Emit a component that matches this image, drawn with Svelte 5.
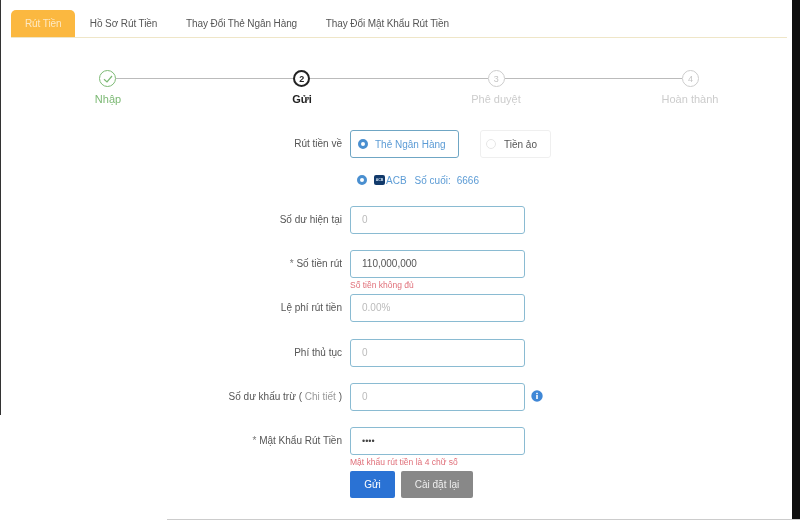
<script>
  const tabs = ['Rút Tiền', 'Hồ Sơ Rút Tiền', 'Thay Đổi Thẻ Ngân Hàng', 'Thay Đổi Mật Khẩu Rút Tiền'];
  const steps = [
    { label: 'Nhập', state: 'done' },
    { label: 'Gửi', state: 'current', n: 2 },
    { label: 'Phê duyệt', state: 'todo', n: 3 },
    { label: 'Hoàn thành', state: 'todo', n: 4 }
  ];
</script>

<div class="shot">
  <div class="page">
    <nav class="tabs">
      {#each tabs as tab, i}
        <div class="tab" class:active={i === 0}>{tab}</div>
      {/each}
    </nav>

    <div class="track">
      {#each steps as step, i}
        {#if i > 0}<span class="line"></span>{/if}
        <span class="dot {step.state}">
          {#if step.state === 'done'}
            <svg width="12" height="12" viewBox="0 0 12 12" fill="none" stroke="#7cb974" stroke-width="1.2"><path d="M2 6.2 5 9l5-6" /></svg>
          {:else}
            {step.n}
          {/if}
        </span>
      {/each}
    </div>
    <div class="labels">
      {#each steps as step}
        <div class="step-label {step.state}">{step.label}</div>
      {/each}
    </div>

    <form class="form">
      <div class="row choice">
        <div class="label">Rút tiền về</div>
        <div class="option on"><span class="radio on"></span>Thẻ Ngân Hàng</div>
        <div class="option off"><span class="radio"></span>Tiền ảo</div>
      </div>

      <div class="bank">
        <span class="radio on"></span>
        <span class="acb">ACB</span>
        <span class="bank-name">ACB</span>
        <span>Số cuối:</span>
        <span>6666</span>
      </div>

      <div class="row">
        <div class="label">Số dư hiện tại</div>
        <div class="control"><div class="input muted">0</div></div>
      </div>
      <div class="row">
        <div class="label"><i>*</i> Số tiền rút</div>
        <div class="control">
          <div class="input">110,000,000</div>
          <div class="error">Số tiền không đủ</div>
        </div>
      </div>
      <div class="row">
        <div class="label">Lệ phí rút tiền</div>
        <div class="control"><div class="input muted">0.00%</div></div>
      </div>
      <div class="row">
        <div class="label">Phí thủ tục</div>
        <div class="control"><div class="input muted">0</div></div>
      </div>
      <div class="row">
        <div class="label">Số dư khấu trừ ( <span class="link">Chi tiết</span> )</div>
        <div class="control"><div class="input muted">0</div></div>
        <svg class="info" width="12" height="12" viewBox="0 0 12 12">
          <circle cx="6" cy="6" r="5.7" fill="#3f87d6" />
          <rect x="5.2" y="5" width="1.6" height="4" fill="#fff" />
          <rect x="5.2" y="2.8" width="1.6" height="1.4" fill="#fff" />
        </svg>
      </div>
      <div class="row">
        <div class="label"><i>*</i> Mật Khẩu Rút Tiền</div>
        <div class="control">
          <div class="input dots">••••</div>
          <div class="error">Mật khẩu rút tiền là 4 chữ số</div>
        </div>
      </div>

      <div class="actions">
        <div class="btn send">Gửi</div>
        <div class="btn reset">Cài đặt lại</div>
      </div>
    </form>
  </div>
  <div class="rule"></div>
</div>

<style>
  :global(body) {
    margin: 0;
    background: #fff;
  }
  .shot {
    position: relative;
    width: 800px;
    height: 522px;
    overflow: hidden;
    font-family: "Liberation Sans", Arial, sans-serif;
    font-size: 10px;
    color: #555;
    filter: blur(0.45px);
  }
  /* edge of the window that was captured */
  .shot::before {
    content: "";
    position: absolute;
    left: 0;
    top: 0;
    width: 1px;
    height: 415px;
    background: #333;
  }
  .page {
    box-sizing: border-box;
    height: 519px;
    border-right: 8px solid #0f0f0f;
    padding: 10px 5px 0 11px;
  }
  .tabs {
    display: flex;
    height: 27px;
    border-bottom: 1px solid #efe6c8;
  }
  .tab {
    padding: 0 14.4px;
    letter-spacing: -0.1px;
    line-height: 28px;
    color: #555;
  }
  .tab.active {
    padding: 0 14px;
    color: #fde9c4;
    background: #fbb840;
    border-radius: 5px 5px 0 0;
  }
  .track {
    display: flex;
    align-items: center;
    width: 600px;
    margin: 32px 0 0 88px;
  }
  .line {
    flex: 1;
    height: 1px;
    background: #bbb;
  }
  .dot {
    box-sizing: border-box;
    display: flex;
    align-items: center;
    justify-content: center;
    width: 17px;
    height: 17px;
    border: 1.5px solid #ccc;
    border-radius: 50%;
    font-size: 9px;
    color: #c4c4c4;
  }
  .dot.done {
    border-color: #7cb974;
  }
  .dot.current {
    border: 2px solid #222;
    color: #222;
    font-weight: bold;
  }
  .labels {
    display: grid;
    grid-template-columns: repeat(4, 194px);
    margin-top: 4px;
    text-align: center;
    font-size: 11px;
    line-height: 16px;
  }
  .step-label.done {
    color: #7cb974;
  }
  .step-label.current {
    color: #222;
    font-weight: bold;
  }
  .step-label.todo {
    color: #ccc;
  }
  .form {
    margin-top: 23px;
  }
  .row {
    display: flex;
    align-items: flex-start;
    height: 44.2px;
  }
  .label {
    box-sizing: border-box;
    width: 339px;
    padding-right: 8px;
    text-align: right;
    line-height: 27px;
    color: #555;
    flex-shrink: 0;
  }
  .label i {
    color: #777;
    font-style: normal;
  }
  .link {
    color: #999;
  }
  .choice {
    height: 28px;
  }
  .choice .label {
    line-height: 28px;
  }
  .option {
    box-sizing: border-box;
    display: flex;
    align-items: center;
    height: 28px;
    border-radius: 3px;
  }
  .option.on {
    width: 109px;
    padding-left: 7px;
    border: 1px solid #6fa6c4;
    color: #5b9bd5;
  }
  .option.off {
    width: 71px;
    margin-left: 21px;
    padding-left: 5px;
    border: 1px solid #efefef;
    color: #555;
  }
  .option.off .radio {
    margin-right: 8px;
  }
  .radio {
    box-sizing: border-box;
    width: 10px;
    height: 10px;
    margin-right: 7px;
    border: 1px solid #e6e6e6;
    border-radius: 50%;
    flex-shrink: 0;
  }
  .radio.on {
    border: 3.5px solid #4a8fd0;
    background: #fff;
  }
  .bank {
    display: flex;
    align-items: center;
    height: 20px;
    margin: 12px 0 16px 346px;
    color: #5b9bd5;
  }
  .bank-name {
    margin-right: 8px;
  }
  .bank span:last-child {
    margin-left: 6px;
  }
  .acb {
    width: 11px;
    height: 10px;
    margin-right: 1px;
    border-radius: 2px;
    background: #123a6b;
    color: #cfe0f2;
    font-size: 3.5px;
    line-height: 10px;
    text-align: center;
    font-weight: bold;
  }
  .control {
    width: 175px;
  }
  .input {
    box-sizing: border-box;
    height: 28px;
    padding-left: 11px;
    border: 1px solid #8abbd2;
    border-radius: 3px;
    line-height: 26px;
    color: #555;
  }
  .input.muted {
    color: #bbb;
  }
  .input.dots {
    font-size: 9px;
    color: #444;
  }
  .error {
    margin-top: 1px;
    font-size: 8.5px;
    line-height: 12px;
    color: #e0707a;
    white-space: nowrap;
  }
  .info {
    margin: 7px 0 0 6px;
  }
  .actions {
    display: flex;
    gap: 6px;
    margin: 0 0 0 339px;
  }
  .btn {
    height: 27px;
    line-height: 27px;
    border-radius: 2px;
    text-align: center;
    color: #fff;
  }
  .send {
    width: 45px;
    background: #2a72d4;
  }
  .reset {
    width: 72px;
    background: #888;
    color: #eee;
  }
  .rule {
    height: 1px;
    margin-left: 167px;
    background: #ccc;
  }
</style>
